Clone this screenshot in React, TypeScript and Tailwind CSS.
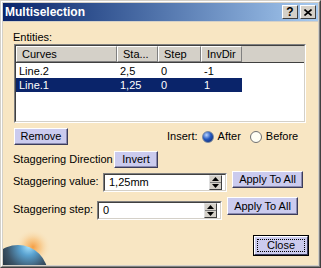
import React from "react";

function Btn({ label, className = "" }: { label: string; className?: string }) {
  return (
    <div
      className={`flex items-center justify-center bg-[#cbcbee] border border-t-white border-l-white border-b-[#3c3c5a] border-r-[#3c3c5a] shadow-[inset_-1px_-1px_0_#8a8ab0] text-[11px] text-black ${className}`}
    >
      {label}
    </div>
  );
}

function Spinner() {
  return (
    <div className="flex flex-col w-[13px] h-[15px] bg-[#d4d0c8] border border-[#404040] border-t-[#e0e0e0] border-l-[#e0e0e0]">
      <div className="flex-1 flex items-center justify-center border-b border-[#808080]">
        <svg width="7" height="4" viewBox="0 0 7 4">
          <polygon points="3.5,0 7,4 0,4" fill="#000" />
        </svg>
      </div>
      <div className="flex-1 flex items-center justify-center">
        <svg width="7" height="4" viewBox="0 0 7 4">
          <polygon points="0,0 7,0 3.5,4" fill="#000" />
        </svg>
      </div>
    </div>
  );
}

function SpinInput({ value, className = "" }: { value: string; className?: string }) {
  return (
    <div
      className={`flex items-center h-[19px] bg-white border border-t-[#808080] border-l-[#808080] border-b-white border-r-white ${className}`}
    >
      <div className="flex-1 h-full flex items-center border border-t-[#404040] border-l-[#404040] border-b-[#d4d0c8] border-r-[#d4d0c8] pl-[4px] pr-[3px]">
        <span className="flex-1 text-[11px] leading-none">{value}</span>
        <Spinner />
      </div>
    </div>
  );
}

const cols = [
  { name: "Curves", w: "w-[101px]" },
  { name: "Sta...", w: "w-[41px]" },
  { name: "Step", w: "w-[43px]" },
  { name: "InvDir", w: "w-[41px]" },
];

const rows = [
  { c: ["Line.2", "2,5", "0", "-1"], sel: false },
  { c: ["Line.1", "1,25", "0", "1"], sel: true },
];

export default function App() {
  return (
    <div className="w-[321px] h-[268px] bg-[#d4d0c8] border border-[#404040] border-t-[#d4d0c8] border-l-[#d4d0c8] font-['Liberation_Sans',Arial,sans-serif] text-black">
      <div className="w-full h-full flex flex-col border border-[#808080] border-t-white border-l-white p-px">
        {/* Title bar */}
        <div className="h-[18px] flex items-center bg-gradient-to-r from-[#0a246a] to-[#a6caf0] pl-[2px] pr-[2px]">
          <span className="flex-1 text-white font-bold text-[12px] leading-none">Multiselection</span>
          <div className="flex gap-[2px]">
            <div className="w-[16px] h-[14px] bg-[#d4d0c8] border border-t-white border-l-white border-b-[#404040] border-r-[#404040] flex items-center justify-center text-[12px] font-bold leading-none">
              ?
            </div>
            <div className="w-[16px] h-[14px] bg-[#d4d0c8] border border-t-white border-l-white border-b-[#404040] border-r-[#404040] flex items-center justify-center">
              <svg width="8" height="7" viewBox="0 0 8 7">
                <path d="M0.5 0.5 L7.5 6.5 M7.5 0.5 L0.5 6.5" stroke="#000" strokeWidth="1.6" />
              </svg>
            </div>
          </div>
        </div>

        {/* Body */}
        <div className="relative flex-1 mt-px bg-[#f8e6c3] flex flex-col pl-[10px] pt-[9px] overflow-hidden">
          <svg className="absolute left-0 bottom-0" width="60" height="45" viewBox="0 0 60 45">
            <defs>
              <radialGradient id="glow" cx="30" cy="27" r="18" gradientUnits="userSpaceOnUse">
                <stop offset="0" stopColor="#f59a3c" stopOpacity="0.95" />
                <stop offset="0.45" stopColor="#f7b768" stopOpacity="0.55" />
                <stop offset="1" stopColor="#f8e6c3" stopOpacity="0" />
              </radialGradient>
              <radialGradient id="planet" cx="24" cy="30" r="34" fx="26" fy="26" gradientUnits="userSpaceOnUse">
                <stop offset="0" stopColor="#a8e4ff" />
                <stop offset="0.25" stopColor="#5aa2d0" />
                <stop offset="0.6" stopColor="#3c5468" />
                <stop offset="1" stopColor="#1c232c" />
              </radialGradient>
            </defs>
            <rect x="0" y="0" width="60" height="45" fill="url(#glow)" />
            <circle cx="15" cy="55" r="30" fill="url(#planet)" />
          </svg>

          <div className="relative h-[13px] text-[11px] leading-[13px]">Entities:</div>

          {/* Table */}
          <div className="relative ml-px w-[292px] h-[79px] bg-white border border-t-[#808080] border-l-[#808080] border-b-white border-r-white">
            <div className="w-full h-full border border-t-[#404040] border-l-[#404040] border-b-[#d4d0c8] border-r-[#d4d0c8]">
              <div className="flex h-[17px] bg-[#d4d0c8] border-b border-[#404040]">
                {cols.map((c) => (
                  <div
                    key={c.name}
                    className={`${c.w} h-full flex items-center pl-[5px] text-[11px] leading-none border border-t-white border-l-white border-b-[#808080] border-r-[#808080]`}
                  >
                    {c.name}
                  </div>
                ))}
              </div>
              <div className="pt-px">
                {rows.map((r) => (
                  <div
                    key={r.c[0]}
                    className={`flex h-[14px] w-[226px] items-center text-[11px] leading-none ${r.sel ? "bg-[#0a246a] text-white" : ""}`}
                  >
                    {r.c.map((v, i) => (
                      <span key={i} className={`${cols[i].w} pl-[3px]`}>
                        {v}
                      </span>
                    ))}
                  </div>
                ))}
              </div>
            </div>
          </div>

          {/* Remove + Insert */}
          <div className="relative flex items-center h-[19px] mt-[4px] ml-px text-[11px]">
            <Btn label="Remove" className="w-[54px] h-[17px]" />
            <span className="ml-[99px]">Insert:</span>
            <span className="ml-[4px] w-[12px] h-[12px] rounded-full border border-[#7a8aa0] bg-[radial-gradient(circle_at_35%_30%,#b8d4ff,#2458c0_45%,#0a2060)]" />
            <span className="ml-[4px]">After</span>
            <span className="ml-[9px] w-[12px] h-[12px] rounded-full border border-[#707070] bg-[#fffef4]" />
            <span className="ml-[4px]">Before</span>
          </div>

          {/* Staggering direction */}
          <div className="relative flex items-center h-[19px] mt-[4px] text-[11px]">
            <span className="w-[101px]">Staggering Direction</span>
            <Btn label="Invert" className="w-[44px] h-[17px]" />
          </div>

          {/* Staggering value */}
          <div className="relative flex items-start h-[21px] mt-[2px] text-[11px]">
            <span className="w-[90px] mt-[2px]">Staggering value:</span>
            <SpinInput value="1,25mm" className="w-[124px] mt-[2px]" />
            <Btn label="Apply To All" className="w-[71px] h-[17px] ml-[5px]" />
          </div>

          {/* Staggering step */}
          <div className="relative flex items-start h-[24px] mt-[5px] text-[11px]">
            <span className="w-[84px] mt-[4px]">Staggering step:</span>
            <SpinInput value="0" className="w-[125px] mt-[4px]" />
            <Btn label="Apply To All" className="w-[71px] h-[18px] ml-[5px]" />
          </div>

          {/* Close */}
          <div className="relative flex justify-end mt-[14px] pr-[9px]">
            <div className="w-[56px] h-[21px] border border-black">
              <div className="w-full h-full bg-[#cbcbee] border border-t-white border-l-white border-b-[#3c3c5a] border-r-[#3c3c5a] flex items-center justify-center p-[2px]">
                <div className="w-full h-full border border-dotted border-black flex items-center justify-center text-[11px] leading-none">
                  Close
                </div>
              </div>
            </div>
          </div>
        </div>
      </div>
    </div>
  );
}
